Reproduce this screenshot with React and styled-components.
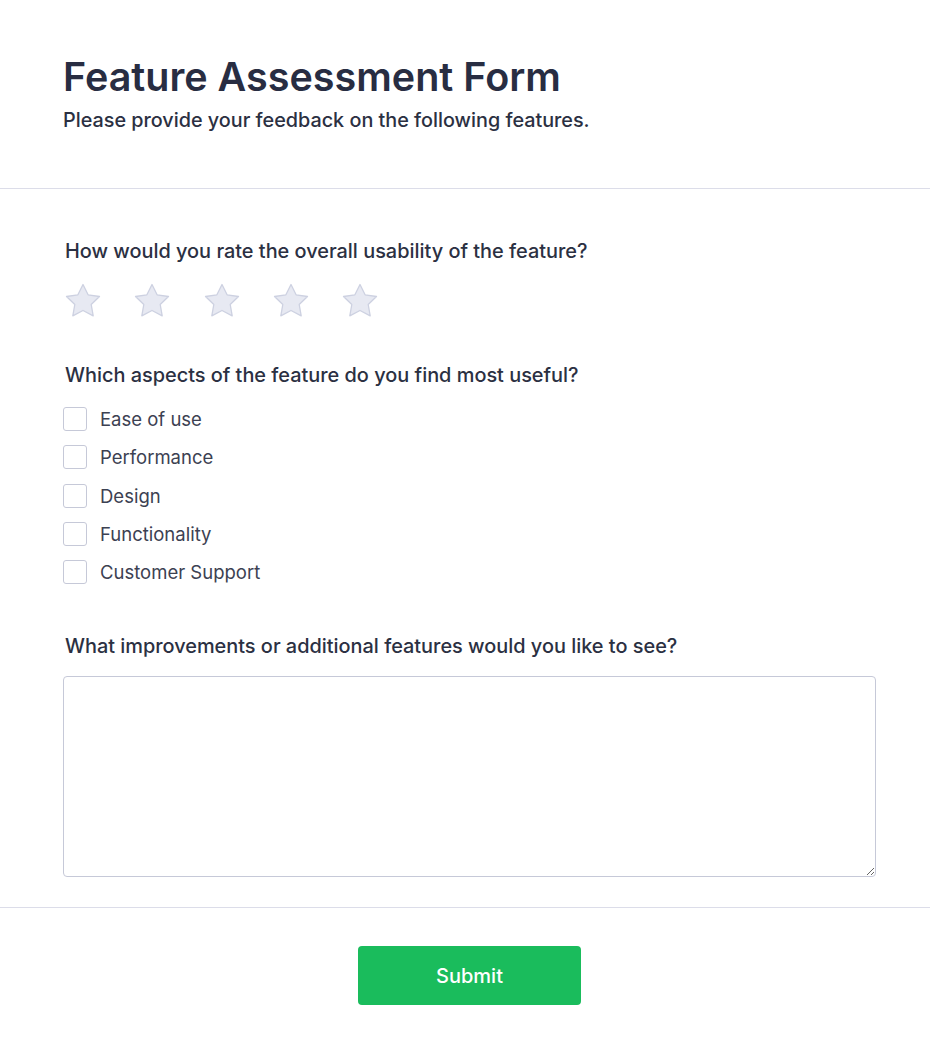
import React from "react";
import styled, { createGlobalStyle } from "styled-components";

const Global = createGlobalStyle`
  * { box-sizing: border-box; }
  body {
    margin: 0;
    background: #ffffff;
    font-family: Inter, "Noto Sans", sans-serif;
    color: #2b3042;
  }
`;

const Page = styled.div`
  width: 930px;
  background: #fff;
`;

const Header = styled.header`
  padding: 53px 63px 0;
  height: 189px;
  border-bottom: 1px solid #dcdde9;
`;

const Title = styled.h1`
  margin: 0;
  font-size: 39.5px;
  line-height: 48px;
  font-weight: 600;
  color: #282d42;
`;

const Subtitle = styled.p`
  margin: 6px 0 0;
  font-size: 19.8px;
  line-height: 27px;
  font-weight: 500;
  color: #2b3042;
`;

const Body = styled.main`
  padding: 49px 54px 30px 63px;
  display: flex;
  flex-direction: column;
`;

const Question = styled.section`
  display: flex;
  flex-direction: column;
  margin-bottom: ${(p) => p.$mb || 0}px;
`;

const Label = styled.div`
  font-size: 19.9px;
  line-height: 27px;
  font-weight: 500;
  color: #2b3042;
  padding-left: 2px;
`;

const Stars = styled.div`
  display: flex;
  gap: 29.3px;
  margin-top: 16px;
`;

const StarSvg = styled.svg`
  width: 40px;
  height: 40px;
  display: block;
`;

const Options = styled.div`
  display: flex;
  flex-direction: column;
  gap: 14.3px;
  margin-top: 18px;
`;

const Option = styled.label`
  display: flex;
  align-items: center;
  gap: 13px;
  height: 24px;
  font-size: 18.5px;
  color: #3c4152;
  cursor: pointer;
`;

const Box = styled.span`
  width: 24px;
  height: 24px;
  border: 1.5px solid #c6c9d8;
  border-radius: 3px;
  background: #fff;
  flex: none;
`;

const TextArea = styled.textarea`
  margin-top: 16px;
  width: 813px;
  height: 201px;
  border: 1.5px solid #c6c9d8;
  border-radius: 4px;
  font-family: inherit;
  font-size: 16px;
  padding: 10px;
  resize: vertical;
  outline: none;
`;

const Footer = styled.footer`
  border-top: 1px solid #dcdde9;
  display: flex;
  justify-content: center;
  padding: 38px 54px 49px 63px;
`;

const Button = styled.button`
  width: 223px;
  height: 59px;
  border: none;
  border-radius: 4px;
  background: #1abc5c;
  color: #fff;
  font-family: inherit;
  font-size: 20px;
  font-weight: 500;
  cursor: pointer;
`;

const Star = () => (
  <StarSvg viewBox="0 0 40 40">
    <polygon
      points="20,3.5 25.1,13.8 36.5,15.5 28.2,23.5 30.2,34.8 20,29.5 9.8,34.8 11.8,23.5 3.5,15.5 14.9,13.8"
      fill="#e7e9f2"
      stroke="#cdd1e1"
      strokeWidth="1.3"
      strokeLinejoin="round"
    />
  </StarSvg>
);

const options = ["Ease of use", "Performance", "Design", "Functionality", "Customer Support"];

export default function App() {
  return (
    <Page>
      <Global />
      <Header>
        <Title>Feature Assessment Form</Title>
        <Subtitle>Please provide your feedback on the following features.</Subtitle>
      </Header>
      <Body>
        <Question $mb={41}>
          <Label>How would you rate the overall usability of the feature?</Label>
          <Stars>
            {[0, 1, 2, 3, 4].map((i) => (
              <Star key={i} />
            ))}
          </Stars>
        </Question>
        <Question $mb={49}>
          <Label>Which aspects of the feature do you find most useful?</Label>
          <Options>
            {options.map((o) => (
              <Option key={o}>
                <Box />
                {o}
              </Option>
            ))}
          </Options>
        </Question>
        <Question>
          <Label>What improvements or additional features would you like to see?</Label>
          <TextArea />
        </Question>
      </Body>
      <Footer>
        <Button>Submit</Button>
      </Footer>
    </Page>
  );
}
